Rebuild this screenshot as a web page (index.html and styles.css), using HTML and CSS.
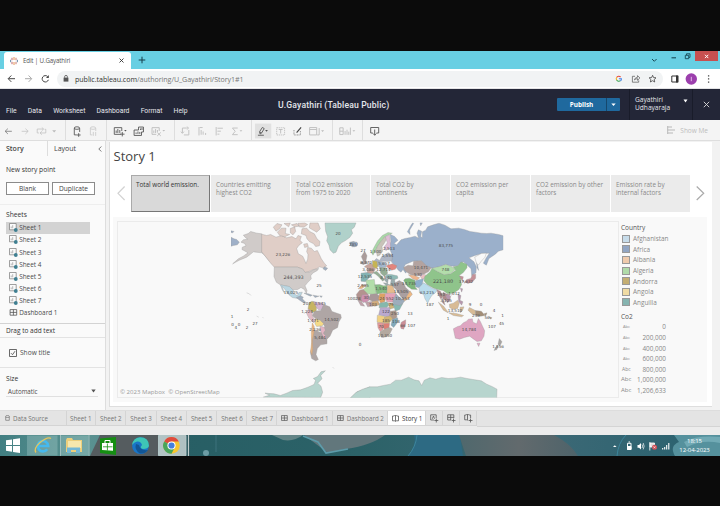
FILE: index.html
```html
<!DOCTYPE html>
<html lang="en">
<head>
<meta charset="utf-8">
<title>Edit | U.Gayathiri</title>
<link rel="stylesheet" href="styles.css">
</head>
<body>
<svg class="defs" width="0" height="0">
  <symbol id="sheet" viewBox="0 0 9 9"><path d="M.5 .5H7.2V6.8H.5Z" fill="#fbfbfb" stroke="#777" stroke-width=".7"/><path d="M2.2 5.3V3.5M3.7 5.3V2.2" stroke="#999" stroke-width=".7"/><circle cx="6.8" cy="7" r="1.9" fill="#3f7f91"/></symbol>
  <symbol id="dash" viewBox="0 0 8 7"><path d="M.6 .6H7.2V6.2H.6ZM.6 3.4H7.2M3.9 .6V6.2" fill="none" stroke="#555" stroke-width=".8"/></symbol>
</svg>
<div class="screen">
  <header class="tabstrip">
    <div class="tab">
      <svg width="8" height="8" viewBox="0 0 8 8" fill="none" stroke-width=".9"><path d="M4 0V3M4 5V8" stroke="#e38b42"/><path d="M2 .8V3.2M2 4.8V7.2" stroke="#b5505c"/><path d="M6 .8V3.2M6 4.8V7.2" stroke="#c26a60"/><path d="M.6 2.8V5.2M7.4 2.8V5.2" stroke="#5a7fa0"/></svg>
      <span>Edit | U.Gayathiri</span>
      <svg class="tabclose" width="5" height="5" viewBox="0 0 5 5"><path d="M.5 .5 4.5 4.5M4.5 .5 .5 4.5" stroke="#333" stroke-width=".9"/></svg>
    </div>
    <svg class="plus" width="8" height="8" viewBox="0 0 8 8"><path d="M4 .7V7.3M.7 4H7.3" stroke="#153d4a" stroke-width="1"/></svg>
    <svg class="wincontrols" width="72" height="18" viewBox="648 51 72 18"><path d="M652 59 654.3 61.3 656.6 59" fill="none" stroke="#174956" stroke-width="1"/><path d="M671.5 57.8H676" stroke="#174956" stroke-width="1.1"/><path d="M685.3 55.3H688.7V58.7H685.3ZM686.5 55V53.8H690V57.4H689" fill="none" stroke="#174956" stroke-width=".9"/><path d="M695 51H718V61H695Z" fill="#c75050"/><path d="M705 54.8 708.3 58.1M708.3 54.8 705 58.1" stroke="#fff" stroke-width="1"/></svg>
  </header>
  <div class="addressbar">
    <svg width="57" height="20" viewBox="0 69 57 20" fill="none" stroke="#454545" stroke-width="1"><path d="M15 78.7H8.3M11.3 75.5 8.2 78.7 11.3 81.9"/><path d="M25 78.7H31.5M28.6 75.5 31.7 78.7 28.6 81.9" stroke="#aaa"/><path d="M47.6 76.5A3.2 3.2 0 1 0 48.4 79.8"/><path d="M48.8 75V77.9H46Z" fill="#454545" stroke="none"/></svg>
    <div class="omnibox">
      <svg width="6" height="7" viewBox="0 0 6 7"><path d="M.6 2.6H5.4V6.6H.6Z" fill="#555"/><path d="M1.6 2.8V1.8A1.4 1.4 0 0 1 4.4 1.8V2.8" fill="none" stroke="#555" stroke-width=".8"/></svg>
      <span class="url"><b>public.tableau.com</b>/authoring/U_Gayathiri/Story1#1</span>
      <svg class="omniicons" width="52" height="14" viewBox="612 72 52 14" fill="none"><g stroke-width="1.1"><path d="M621.6 77A2.5 2.5 0 0 0 617.7 77.4" stroke="#e6473c"/><path d="M617.7 77.2A2.7 2.7 0 0 0 617.7 80.2" stroke="#f0b422"/><path d="M617.7 80A2.5 2.5 0 0 0 621.5 80.7" stroke="#3aa556"/><path d="M621.5 80.8Q622.5 79.9 622.4 78.7H619.9" stroke="#4481e8"/></g><path d="M636 76.3H633.4V82.2H639.7V80.4M635.4 80Q635.8 77.5 638.5 77.3V75.6L640.9 78 638.5 80.3V78.7Q636.7 78.5 635.4 80Z" stroke="#666" stroke-width=".8"/><path d="M653.6 75.3 654.6 77.6 657 77.8 655.2 79.5 655.7 82 653.6 80.7 651.4 82 651.9 79.5 650.1 77.8 652.6 77.6Z" stroke="#444" stroke-width=".8"/></svg>
    </div>
    <svg width="53" height="20" viewBox="667 69 53 20"><path d="M671.8 76H677.8V82H671.8Z" fill="none" stroke="#333" stroke-width="1"/><path d="M676 75.5H678.3V82.5H676Z" fill="#333"/><circle cx="691.3" cy="79" r="5.7" fill="#9c3fad"/><path d="M691.3 76.8V81.2" stroke="#f2d7f5" stroke-width=".8"/><path d="M708.6 75.2V76.5M708.6 78.3V79.6M708.6 81.4V82.7" stroke="#444" stroke-width="1.3"/></svg>
  </div>
  <div class="appheader">
    <nav class="menu"><span>File</span><span>Data</span><span>Worksheet</span><span>Dashboard</span><span>Format</span><span>Help</span></nav>
    <h1>U.Gayathiri (Tableau Public)</h1>
    <div class="publish"><span>Publish</span><svg width="13" height="13" viewBox="0 0 13 13"><path d="M4.3 5.5H8.7L6.5 8Z" fill="#fff"/></svg></div>
    <div class="user"><span>Gayathiri<br>Udhayaraja</span><svg width="5" height="4" viewBox="0 0 5 4"><path d="M.5 .5H4.5L2.5 3.5Z" fill="#fff"/></svg></div>
    <svg class="close" width="7" height="7" viewBox="0 0 7 7"><path d="M.8 .8 6.2 6.2M6.2 .8 .8 6.2" stroke="#ddd" stroke-width=".9"/></svg>
  </div>
  <div class="toolbar">
    <svg class="grp" width="66" height="21" viewBox="0 120 66 21" fill="none" stroke="#777" stroke-width=".8"><path d="M12 131.3H5.3M8 128.6 5.2 131.3 8 134"/><g stroke="#c2c2c2"><path d="M22 131.3H28.5M25.8 128.6 28.6 131.3 25.8 134"/><path d="M39.5 133H37.8V129H44M42.5 127.5 44.3 129 42.5 130.7M45.3 129.3H46.5V133H41M42.5 131.4 40.6 133 42.5 134.7"/></g><path d="M53 130.2H57L55 132.5Z" fill="#bbb" stroke="none"/></svg>
    <svg class="grp" width="41" height="21" viewBox="66 120 41 21" fill="none" stroke="#555" stroke-width=".9"><path d="M74.5 128.3V135H77M80 128.3V132M79 133.2V137M77 135.1H81"/><ellipse cx="77.2" cy="128" rx="2.8" ry="1.3"/><g stroke="#ccc"><path d="M91 128.3V135H93M96.5 128.3V131M94 132V136M96.4 132V136"/><ellipse cx="93.7" cy="128" rx="2.8" ry="1.3"/></g></svg>
    <svg class="grp" width="68" height="21" viewBox="107 120 68 21" fill="none" stroke="#555" stroke-width=".9"><path d="M121 134.4H114.4V127.6H122V131M116.3 133V130.5M118 133V129M120 133V130M122.5 132V136.5M120.3 134.2H124.8"/><path d="M124.4 130H127L125.7 131.6Z" fill="#555" stroke="none"/><path d="M139 130H134.5V135.5H142V132M139 130V127H144V132H142M136.5 134V132.5M138.4 134V131.5M140.3 134V132M141 130V128.5M142.5 130V128"/><g stroke="#bbb"><path d="M157 134.4H152.7V127.6H160V131M154.5 133V130.5M156.3 133V129M158.2 132V130M158 132.5 161.6 136M161.6 132.5 158 136"/><path d="M163.2 130H166L164.6 131.6Z" fill="#bbb" stroke="none"/></g></svg>
    <svg class="grp" width="77" height="21" viewBox="175 120 77 21" fill="none" stroke="#c2c2c2" stroke-width="1"><path d="M182.5 133V128H187M184 135H189V130M181 131.7 182.5 133.4 184 131.7M187 126.7 188.8 128 187 129.4"/><path d="M199.3 127V135.5M201.5 134.8V130M203.5 134.8V131.5M206 135V133M200 127.5H203M216.7 127V135.5M218 128.2H223.5M218 131.2H221.5M218 134.2H220"/><path d="M238.5 128H233.2L236 131.3 233.2 134.7H238.5"/><path d="M240.5 130.2H243.2L241.8 131.8Z" fill="#bbb" stroke="none"/></svg>
    <svg class="grp" width="81" height="21" viewBox="252 120 81 21" fill="none" stroke="#bbb" stroke-width=".9"><path d="M255 123.5H271.5V138.5H255Z" fill="#e1e1e1" stroke="none"/><path d="M258 135.3H264M260.2 134 259.6 131.8 262.5 127.4 264.4 128.6 261.7 133ZM260 132 261.6 133" stroke="#555"/><path d="M265.3 130H268.1L266.7 131.7Z" fill="#555" stroke="none"/><path d="M277 127.7H285V135H277Z" stroke-dasharray="1.2 .8"/><path d="M279 129.5H283M281 129.5V133.5"/><path d="M294.5 130V135H301V131" stroke="#888" stroke-dasharray="1 .6"/><path d="M297.2 132.6 301.7 127.3" stroke="#444" stroke-width="1.2"/><path d="M310.3 127.5H317.5V135H310.3ZM310.3 129.5H317.5M320 128V135H318"/><path d="M322 130.3H325L323.5 132Z" fill="#bbb" stroke="none"/></svg>
    <svg class="grp" width="30" height="21" viewBox="333 120 30 21" fill="none" stroke="#bbb" stroke-width=".9"><path d="M340 134.7V127.7H343.5V134.7ZM345.5 135V131M347.5 135V129.7M349.3 135V131.7M351 135V127.5M340 131.2H343.5"/><path d="M353.2 130.2H356L354.6 131.9Z" fill="#bbb" stroke="none"/></svg>
    <svg width="22" height="21" viewBox="363 120 22 21" fill="none" stroke="#555" stroke-width=".9"><path d="M372.8 133H370.7V127.5H378.7V133H376.6M374.7 129.5V135.2M372.9 133.4 374.7 135.2 376.5 133.4"/></svg>
    <div class="showme"><svg width="9" height="8" viewBox="0 0 9 8"><path d="M.5 1H5M.5 4H8M.5 7H6" stroke="#ccc" stroke-width="1.5"/><path d="M.7 0V8" stroke="#bbb"/></svg><span>Show Me</span></div>
  </div>
  <main class="workspace">
    <aside class="side">
      <div class="sidetabs"><b>Story</b><span>Layout</span><svg width="4" height="6" viewBox="0 0 4 6"><path d="M3.3 .5 .8 3 3.3 5.5" fill="none" stroke="#555" stroke-width=".8"/></svg></div>
      <section class="newpoint"><h2>New story point</h2><div class="buttons"><button>Blank</button><button>Duplicate</button></div></section>
      <section class="sheets">
        <h2>Sheets</h2>
        <ul>
          <li class="on"><svg width="9" height="9"><use href="#sheet"/></svg>Sheet 1</li>
          <li><svg width="9" height="9"><use href="#sheet"/></svg>Sheet 2</li>
          <li><svg width="9" height="9"><use href="#sheet"/></svg>Sheet 3</li>
          <li><svg width="9" height="9"><use href="#sheet"/></svg>Sheet 4</li>
          <li><svg width="9" height="9"><use href="#sheet"/></svg>Sheet 5</li>
          <li><svg width="9" height="9"><use href="#sheet"/></svg>Sheet 6</li>
          <li><svg width="9" height="9"><use href="#sheet"/></svg>Sheet 7</li>
          <li><svg width="9" height="7"><use href="#dash"/></svg>Dashboard 1</li>
        </ul>
      </section>
      <div class="drag">Drag to add text</div>
      <div class="showtitle"><svg width="8" height="8" viewBox="0 0 8 8" fill="none" stroke="#444"><path d="M.5 .5H7.5V7.5H.5Z" stroke-width=".8"/><path d="M2 4.2 3.5 5.7 6 2.2" stroke-width=".8"/></svg>Show title</div>
      <div class="size"><h2>Size</h2><div class="select"><span>Automatic</span><svg width="5" height="4" viewBox="0 0 5 4"><path d="M.3 .5H4.7L2.5 3.5Z" fill="#555"/></svg></div></div>
    </aside>
    <article class="canvas">
      <h2 class="title">Story 1</h2>
      <div class="points">
        <svg width="21" height="37" viewBox="0 0 21 37"><path d="M14.6 11.5 8 18.3 14.6 25" fill="none" stroke="#d2d2d2" stroke-width="1.2"/></svg>
        <div class="point on">Total world emission.</div><div class="point">Countries emitting highest CO2</div><div class="point">Total CO2 emission from 1975 to 2020</div><div class="point">Total CO2 by continents</div><div class="point">CO2 emission per capita</div><div class="point">CO2 emission by other factors</div><div class="point">Emission rate by internal factors</div>
        <svg width="20" height="37" viewBox="0 0 20 37"><path d="M5.7 11.5 12.7 18.3 5.7 25" fill="none" stroke="#aaa" stroke-width="1.2"/></svg>
      </div>
      <div class="viz">
        <div class="mapbox">
          <svg class="map" width="500" height="176" viewBox="118 221.5 500 176">
            <clipPath id="frame"><path d="M231 222H503.3V397H231Z"/></clipPath>
            <g clip-path="url(#frame)">
            <g transform="translate(230 215) scale(.33333)" stroke="#999" stroke-width="1.1" stroke-linejoin="round">
              <path fill="#9fb0c8" d="M3 65 12 70 20 72 28 80 22 88 10 90 3 92ZM3 46 12 48 8 52 3 51Z"/>
              <path fill="#d0cbc9" d="M95 55 80 53 62 48 55 54 40 59 46 66 53 71 40 73 33 80 44 84 48 91 37 95 36 102 47 108 54 112 40 122 25 130 8 145 28 134 50 125 63 115 70 109 95 112 103 118 114 132 120 138 116 126 107 113 95 109Z"/>
              <path fill="#e0cec7" d="M95 56 110 60 122 57 138 65 155 60 170 67 186 63 198 70 204 60 214 63 210 74 217 82 207 89 200 99 205 115 218 122 223 132 228 144 233 131 234 117 230 108 233 96 244 98 253 108 262 105 268 117 274 130 283 143 290 151 280 157 268 154 260 160 248 163 237 168 225 171 218 161 202 155H133L122 143 112 130 95 109Z"/>
              <path fill="#e0cec7" d="M130 35 141 24 156 28 149 39 138 47ZM142 50 154 38 168 38 166 54 179 57 164 64 149 60ZM162 24 181 22 176 34ZM181 39 194 34 197 48 189 58 181 52ZM184 28 201 24 207 32 194 34ZM204 23 224 22 233 27 222 35 208 34ZM216 40 230 38 239 48 253 55 261 70 270 78 268 91 257 93 250 84 239 79 231 70 228 60 214 55ZM221 86 232 84 235 93 224 96ZM240 22 264 22 271 40 260 50 248 43 238 37Z"/>
              <path fill="#d0cbc9" d="M133 155H202L217 160 226 171 240 169 250 163 266 159 262 165 248 173 242 181 244 190 232 202 225 211 231 225 229 234 223 222 213 216 203 222 188 223 179 214 151 208 139 200 132 183Z"/>
              <path fill="#b9d6e2" d="M151 208 178 213 190 224 190 234 202 240 207 231 217 230 212 241 203 249 187 246 177 238 168 226 163 219 156 213 163 232 158 225Z"/>
              <path fill="#9faebf" d="M199 246 212 241 220 245 217 250 227 260 222 263 206 252ZM222 233 235 235 247 239 241 242 230 237ZM249 239 267 242 255 246ZM269 241 277 242 273 246ZM283 154 293 158 287 165 279 160Z"/>
              <path fill="#c7b461" d="M237 262 246 257 259 262 260 274 258 290 247 290 234 281Z"/>
              <path fill="#d4b5d1" d="M250 258 264 261 275 262 281 269 276 282 266 283 259 275Z"/>
              <path fill="#afa6a5" d="M281 267 299 274 306 288 332 297 334 307 326 320 323 336 308 344 300 362 291 371 291 385 272 388 262 399 258 417 265 432 257 436 245 429 241 411 245 393 246 365 251 342 272 351 280 344 284 332 271 315 257 309 247 301 254 287 273 285Z"/>
              <path fill="#e2bcc5" d="M236 280 247 290 247 302 257 316 251 322 237 308 229 292Z"/>
              <path fill="#f5da87" d="M257 309 270 314 281 324 277 331 260 333 255 325Z"/>
              <path fill="#e2b4c2" d="M270 332 283 335 286 344 280 353 291 365 282 370 271 345Z"/>
              <path fill="#e7b685" stroke="#c49b70" d="M247 322 253 334 251 355 247 373 248 400 246 418 242 407 245 380 244 352Z"/>
              <path fill="#b0d1ca" d="M285 22H378L373 35 364 43 368 53 359 66 345 76 334 82 325 92 318 110 310 113 300 103 297 89 290 76 293 64 287 47Z"/>
              <path fill="#899cad" d="M359 80 371 78 383 83 380 92 368 94 361 90Z"/>
              <path fill="#b7d5ce" d="M100 545 119 539 105 533 132 535 151 540 170 533 188 525 212 523 234 515 252 507 257 494 250 489 263 483 273 469 286 466 272 480 276 490 263 503 273 512 278 530 272 546ZM362 548 381 529 403 521 420 514V550Z"/>
              <path fill="none" stroke="#aaa" d="M50 232 58 235 63 240M80 302 86 305M98 305 100 308M390 380 391 382M308 455 312 459"/>
            </g>
            <g transform="translate(340 215) scale(.33333)" stroke="#999" stroke-width="1" stroke-linejoin="round">
              <path fill="#9bb0cb" d="M150 56 164 63 174 74 162 84 170 88 183 73 195 69 211 66 225 62 236 68 231 53 235 43 245 47 242 63 247 67 247 49 257 44 263 34 280 28 297 23 315 29 333 40 356 38 373 42 390 48 406 50 424 53 440 54 453 53 476 57 490 61V103L475 107 466 116 447 129 439 149 430 143 438 128 448 113 426 114 405 120 387 127 402 139 409 154 408 172 395 181 393 160 382 149 370 139 354 151 335 152 316 147 299 154 275 158 257 151 243 136 219 137 196 147 191 157 202 165 197 173 189 162 183 170 175 164 165 151 154 139 157 119 151 105 147 91 153 78Z"/>
              <path fill="#9bb0cb" d="M202 49 213 29 218 22 221 24 209 44 210 57ZM240 22 247 22 242 31ZM409 132 413 150 416 165 411 157ZM38 80 51 80 53 89 43 94 32 88Z"/>
              <path fill="#f9f9f9" d="M404 125 424 114 439 113 435 125 424 137 415 149 409 142Z"/>
              <path fill="#a9d7a7" d="M94 111 103 94 113 76 127 60 144 51 157 53 147 58 136 63 122 79 113 93 105 109 99 119Z"/>
              <path fill="#c9c3b9" d="M112 93 122 79 135 63 142 67 133 83 126 93 128 107 119 119 112 122 108 105Z"/>
              <path fill="#dfbcd5" d="M136 64 148 58 151 77 152 98 137 104 132 95 142 82Z"/>
              <path fill="#aeb6c5" d="M126 122 145 112 157 119 156 135 146 138 130 137 112 140 103 136 109 129 119 135Z"/>
              <path fill="#aa9c9a" d="M64 123 74 107 81 121 78 135 83 143 70 147 60 143 70 137Z"/>
              <path fill="#c7a49b" d="M79 149 91 143 101 149 106 161 99 174 81 173 84 159 73 154Z"/>
              <path fill="#c6b454" d="M97 135 111 138 115 150 109 160 98 153Z"/>
              <path fill="#a4b8ce" d="M112 139 134 140 139 154 121 158 113 150Z"/>
              <path fill="#83b3b3" d="M63 173 80 171 96 176 86 188 76 199 63 197Z"/>
              <path fill="#95ae95" d="M98 172 110 167 127 184 133 193 128 197 116 184 107 176ZM119 156 139 157 143 173 133 183 122 173Z"/>
              <path fill="#e3857d" d="M138 151 157 145 171 151 166 161 155 164 147 160Z"/>
              <path fill="#8fbab5" d="M139 177 154 177 172 181 174 188 160 194 149 191 139 186Z"/>
              <path fill="#b3a3a0" d="M191 156 204 149 219 151 221 137 244 136 259 150 274 157 265 169 251 176 229 180 212 178 202 171 195 166Z"/>
              <path fill="#efb58d" d="M205 178 224 180 239 187 231 194 218 190Z"/>
              <path fill="#eac0c3" d="M237 177 254 177 264 183 247 192Z"/>
              <path fill="#7fb77c" d="M195 190 208 188 225 194 226 215 232 222 215 221 202 212 191 195Z"/>
              <path fill="#8dafcc" d="M226 196 241 192 250 190 247 207 236 217 227 214Z"/>
              <path fill="#8fc48b" d="M254 183 270 169 276 158 293 168 312 177 332 175 347 164 339 154 354 151 363 139 381 146 381 157 370 171 357 181 364 184 362 196 365 207 357 222 340 233 323 235 309 225 297 223 281 218 261 207 252 196Z"/>
              <path fill="#b3ddab" d="M276 158 299 153 318 147 335 154 346 162 332 174 313 178 292 168Z"/>
              <path fill="#badcec" d="M238 216 250 202 261 208 278 219 293 223 285 233 276 239 268 252 263 263 255 250 251 237 238 231Z"/>
              <path fill="#b18b8b" d="M290 222 302 228 308 243 303 251 295 237ZM309 230 325 238 329 250 321 258 310 250 315 269 307 261 308 246Z"/>
              <path fill="#b697ad" d="M323 235 332 242 329 257 321 262 323 252 317 243ZM361 218 368 220 365 230ZM354 236 363 240 360 254 369 259 365 269 356 258Z"/>
              <path fill="#c59198" d="M358 181 370 184 367 197 375 201 380 192 392 189 398 176 407 176 407 188 398 199 384 204 373 199 365 194Z"/>
              <path fill="#d8bb95" d="M295 260 311 272 322 287 324 292 310 284ZM328 266 340 263 353 254 358 263 353 279 339 282 329 276ZM326 292 349 294 371 300 365 304 340 300ZM360 275 372 274 368 284 361 292ZM388 276 406 285 407 300 394 294 384 284Z"/>
              <path fill="#a38e77" d="M406 285 424 287 435 300 422 302 407 299ZM432 295 441 292 437 302ZM446 303 456 307 452 311Z"/>
              <path fill="#dfa6c2" d="M340 340 353 333 361 331 370 322 380 317 385 311 397 310 399 320 410 325 415 309 421 318 428 333 434 346 432 362 424 376 411 378 401 371 389 362 373 366 359 371 346 368 343 355ZM411 383 420 383 416 393Z"/>
              <path fill="#a7a4a2" d="M478 369 486 379 480 391 474 386ZM468 394 475 388 471 402 462 405Z"/>
              <path fill="#9aacae" d="M131 191 145 190 143 203 130 202 139 211 151 207 154 190 164 192 166 207 157 219Z"/>
              <path fill="#aa9fa0" d="M163 203 178 195 191 203 197 216 209 227 215 234 208 246 193 253 182 243 171 225 162 216Z"/>
              <path fill="#edb884" d="M210 226 217 237 205 250 191 258 183 253 196 249ZM78 211 70 216 65 220 54 220 67 207Z"/>
              <path fill="#b2dda9" d="M78 194 103 192 105 208 109 235 98 237 83 235 68 224 80 213Z"/>
              <path fill="#86bc83" d="M104 208 119 207 131 211 141 210 141 234 128 232 110 236Z"/>
              <path fill="#e6bb8d" d="M142 209 157 210 167 232 141 234Z"/>
              <path fill="#b3938f" d="M49 237 59 224 70 222 84 236 91 249 75 249 66 259 53 254Z"/>
              <path fill="#cf93b2" d="M66 238 82 237 90 251 82 259 69 261 63 251Z"/>
              <path fill="#a89899" d="M91 236 110 235 119 242 117 255 99 258 86 252Z"/>
              <path fill="#dda265" d="M119 234 136 234 135 258 122 263 115 249Z"/>
              <path fill="#e6a2b8" d="M137 234 167 233 170 246 160 260 141 259 134 247Z"/>
              <path fill="#9dadbc" d="M168 235 179 246 194 256 184 270 172 282 163 268 158 258Z"/>
              <path fill="#bfa2aa" d="M54 255 66 260 74 272 62 270ZM76 260 97 258 98 272 83 274Z"/>
              <path fill="#d3ad7e" d="M96 258 114 255 119 268 105 272 96 271Z"/>
              <path fill="#85b8ac" d="M119 263 140 259 148 267 140 276 117 277Z"/>
              <path fill="#cfb87b" d="M145 262 159 263 163 277 148 281Z"/>
              <path fill="#86b9b3" d="M160 266 178 270 188 264 179 282 166 287Z"/>
              <path fill="#baa9cf" d="M121 277 149 276 151 293 148 305 134 302 116 298Z"/>
              <path fill="#ad9a8e" d="M151 287 168 285 171 305 159 313 148 303Z"/>
              <path fill="#f0d082" d="M112 299 133 302 138 317 129 323 111 320Z"/>
              <path fill="#d3b675" d="M134 304 151 301 158 310 146 324 130 322Z"/>
              <path fill="#81a9ba" d="M157 311 173 307 174 319 161 336 153 329Z"/>
              <path fill="#e2999c" d="M112 322 129 322 129 342 121 349 114 337Z"/>
              <path fill="#dd7f75" d="M130 323 149 323 147 337 134 342 129 336Z"/>
              <path fill="#b4a99f" d="M121 349 133 341 149 336 157 340 150 354 140 364 125 366 119 355Z"/>
              <path fill="#cc8e97" d="M184 320 197 313 197 325 191 341 183 339 181 331Z"/>
              <path fill="#b7d5ce" d="M30 548 48 531 68 521 90 514 112 514 130 510 151 506 167 494 184 494 206 485 222 493 237 496 245 510 253 494 270 487 287 491 305 486 325 489 342 488 362 485 381 489 399 492 424 496 440 506 456 513 471 521 470 548Z"/>
            </g>
            </g>
            <g class="labels">
              <text x="283" y="255.4">23,226</text><text class="big" x="293.5" y="278">244,393</text><text x="338" y="234">20</text><text x="291" y="293">18,025</text><text x="319" y="286">25</text><text x="307" y="304">207</text><text x="320" y="304.5">3,545</text><text x="307" y="312">1,224</text><text x="313" y="321">1,471</text><text x="331.5" y="320">14,502</text><text x="315" y="330">2,236</text><text x="320" y="338">5,484</text><text x="248" y="310">2</text><text x="232" y="317">1</text><text x="232.5" y="325">0</text><text x="235.7" y="328">4</text><text x="239" y="325.5">0</text><text x="247" y="328">2</text><text x="255" y="324.5">27</text><text x="360" y="345">0</text>
              <text x="353" y="245">285</text><text x="363" y="251">27</text><text x="375.5" y="252">1,500</text><text x="389" y="249">2,513</text><text x="387.5" y="256.5">1,554</text><text x="366" y="263.5">9,370</text><text x="384" y="264">5,657</text><text x="368" y="270.5">3,486</text><text x="383.5" y="270.5">12,714</text><text x="365" y="277.5">12,535</text><text x="386" y="278.5">8,840</text><text x="363" y="286.5">2,995</text><text x="381" y="289.5">1,540</text><text x="395" y="285">557</text><text x="401" y="292">18,505</text><text x="354" y="299">10028</text><text x="382" y="299">24</text><text x="390" y="299">552</text><text x="402.5" y="299">10,553</text><text x="366" y="298">30</text><text x="373" y="305">103</text><text x="391" y="305">79</text><text x="386" y="312.5">122</text><text x="395" y="314.5">250</text><text x="386" y="321.5">185</text><text x="396" y="322">118</text><text x="381" y="327.5">70</text><text x="385" y="336">10,350</text><text x="410" y="314.5">13</text><text x="411.5" y="326.5">107</text><text x="403" y="326.5">66</text>
              <text x="446" y="246">83,775</text><text x="421" y="268.5">10,471</text><text x="418" y="275.5">530</text><text x="445.5" y="270.5">748</text><text class="big" x="443" y="282.7">221,180</text><text x="409" y="284">14,735</text><text x="427" y="293.5">63,215</text><text x="430" y="305">187</text><text x="466" y="282">37,632</text><text x="441" y="295">190</text><text x="454" y="294.5">1,012</text><text x="446" y="301">3,125</text><text x="455" y="311.5">13,510</text><text x="448" y="319">1</text><text x="470" y="305">9</text><text x="481" y="305">0</text><text x="476" y="316">236</text><text x="487" y="318">56</text><text x="494" y="311">4</text><text x="492" y="327">107</text><text x="501.5" y="324">45</text><text x="502.5" y="316">1</text><text x="469" y="330">14,784</text><text x="498" y="347">1,556</text>
            </g>
          </svg>
          <span class="attribution">© 2023 Mapbox&nbsp; © OpenStreetMap</span>
        </div>
        <div class="legend">
          <h3>Country</h3>
          <ul class="colors"><li><i class="c1"></i>Afghanistan</li><li><i class="c2"></i>Africa</li><li><i class="c3"></i>Albania</li><li><i class="c4"></i>Algeria</li><li><i class="c5"></i>Andorra</li><li><i class="c6"></i>Angola</li><li><i class="c7"></i>Anguilla</li></ul>
          <h3>Co2</h3>
          <ul class="sizes"><li><i>Abc</i><span>0</span></li><li><i>Abc</i><span>200,000</span></li><li><i>Abc</i><span>400,000</span></li><li><i>Abc</i><span>600,000</span></li><li class="m"><i>Abc</i><span>800,000</span></li><li class="l"><i>Abc</i><span>1,000,000</span></li><li class="l"><i>Abc</i><span>1,206,633</span></li></ul>
        </div>
      </div>
    </article>
  </main>
  <nav class="sheettabs">
    <span class="source"><svg width="5" height="6" viewBox="0 0 5 6"><path d="M.7 1V5.3H4.3V1M.7 1.2A1.8 .7 0 0 1 4.3 1.2M.7 2.4H4.3" fill="none" stroke="#777" stroke-width=".7"/></svg>Data Source</span>
    <span class="t1">Sheet 1</span><span class="t2">Sheet 2</span><span class="t3">Sheet 3</span><span class="t4">Sheet 4</span><span class="t5">Sheet 5</span><span class="t6">Sheet 6</span><span class="t7">Sheet 7</span>
    <span class="d1"><svg width="7" height="6.2"><use href="#dash"/></svg>Dashboard 1</span><span class="d2"><svg width="7" height="6.2"><use href="#dash"/></svg>Dashboard 2</span>
    <span class="active"><svg width="7" height="7" viewBox="0 0 7 7"><path d="M2 1H.5V5.8H2.5L3.5 6.5 4.5 5.8H6.5V1H5M2.2 .6H4.8M3.5 .6V6" fill="none" stroke="#555" stroke-width=".8"/></svg>Story 1</span>
    <span class="add"><svg width="9" height="9" viewBox="0 0 9 9"><path d="M4 6H.7V.8H6.2V4M2.3 4.8 3.5 2 4.5 4.8M6.3 4.5V8.5M4.4 6.5H8.3" fill="none" stroke="#555" stroke-width=".8"/></svg></span>
    <span class="add"><svg width="9" height="9" viewBox="0 0 9 9"><path d="M4 6H.7V.8H6.8V4M.7 3.4H6.8M3.7 .8V6M6.5 4.5V8.5M4.6 6.5H8.5" fill="none" stroke="#555" stroke-width=".8"/></svg></span>
    <span class="add"><svg width="9" height="9" viewBox="0 0 9 9"><path d="M2 1H.7V5.8H2.5L3.5 6.5M5 1H6.6V4M2.2 .6H4.8M3.5 .6V6M6.5 4.5V8.5M4.6 6.5H8.5" fill="none" stroke="#555" stroke-width=".8"/></svg></span>
  </nav>
  <footer class="taskbar">
    <svg class="wall" width="720" height="21" viewBox="0 0 720 21">
      <defs><linearGradient id="left"><stop offset="0" stop-color="#427f82"/><stop offset=".45" stop-color="#5a9291"/><stop offset=".8" stop-color="#53858a"/><stop offset="1" stop-color="#355e64"/></linearGradient><linearGradient id="mid"><stop offset="0" stop-color="#235b61"/><stop offset=".5" stop-color="#2c6268"/><stop offset=".75" stop-color="#3d6976"/><stop offset="1" stop-color="#28616e"/></linearGradient><linearGradient id="skin"><stop offset="0" stop-color="#4f686d"/><stop offset=".5" stop-color="#626a6d"/><stop offset="1" stop-color="#4e636a"/></linearGradient></defs>
      <path fill="url(#mid)" d="M0 0H720V21H0Z"/><path fill="url(#left)" d="M0 0H190V21H0Z"/><path fill="#555c5f" d="M100 0H158V21H90Z"/>
      <path fill="#638486" d="M272 0H303Q294 7 283 5Z"/><path fill="#62777c" d="M304 0H385Q372 10 346 14L328 18Z"/><path fill="none" stroke="#5d9cab" stroke-width="1.6" d="M303 1 318 7 326 18 348 14"/>
      <path fill="#2d6a83" d="M414 0H460L463 21H408Q417 9 414 0Z"/><path fill="url(#skin)" d="M459 0H554Q571 9 578 21H466Z"/><path fill="none" stroke="#3c849a" d="M417 0Q416 12 408 21M626 0Q618 8 617 21"/><path fill="#55919d" d="M674 0H720V21H675Q669 11 679 7Z"/><path fill="#71aab5" d="M684 7Q697 0 720 2V8Q702 4 687 12Z"/><circle cx="206" cy="18" r="3" fill="#6c9ca4"/><path d="M216 0V17" stroke="#3d737c"/>
    </svg>
    <svg class="apps" width="190" height="21" viewBox="0 0 190 21">
      <g fill="#fff"><path d="M6 5.3 12 4.4V10H6ZM13 4.2 20 3.2V10H13ZM6 11H12V16.8L6 15.8ZM13 11H20V17.9L13 16.9Z"/></g>
      <path d="M27 .5H57.5V20.5H27ZM60.5 .5H88.5V20.5H60.5Z" fill="#b9d9d6" opacity=".3"/><path d="M60.5 0V21M89 0V21" stroke="#b9d0cf" stroke-width=".7"/>
      <path d="M38 11H48.2A5.2 5.2 0 1 0 47.2 14.3" fill="none" stroke="#46b9ed" stroke-width="2.7"/><path d="M36 17.5Q33 14 40 7.5 48 1 51 3.5" fill="none" stroke="#e6c65c" stroke-width="1.2"/>
      <path d="M66 5 67 3H72L73 5H82V17H66Z" fill="#eccf7c"/><path d="M68 6H81V13H68Z" fill="#f6e7ad"/><path d="M67 18V12.5H80V18H76V15H71V18Z" fill="#73b7d5"/>
      <path d="M100 3.5 116 2V20L100 18Z" fill="#158e12"/><path d="M102 8H113V15.8L102 15Z" fill="#fff"/><path d="M105 8V5.5H110V8" fill="none" stroke="#fff"/><path d="M107.4 8.5V15.5M103 11.8H112.5" stroke="#158e12" stroke-width=".8"/>
      <circle cx="140.5" cy="10.7" r="8.4" fill="#1976c8"/><path d="M132 10Q133 3 140 2.3 149 2.5 149 11 148 14 143 14 139 13 142 10 141 6 137 6.5 134 7 132 10Z" fill="#3ec5b6"/><path d="M136 9Q134 15 140 18.5 145 19 148 15 140 16 139 10Z" fill="#125696"/>
      <path d="M158.5 .5H186V20.5H158.5Z" fill="#c9d4d5" stroke="#d9e3e2" stroke-width=".8" opacity=".82"/><path d="M188.5 0V21" stroke="#bdcccc"/><circle cx="171.5" cy="10.5" r="8.3" fill="#f7c62f"/><path d="M171.5 10.5 164.2 6.4A8.3 8.3 0 0 1 178.8 6.4H171.5Z" fill="#df4b3d"/><path d="M171.5 10.5 164.2 6.4A8.3 8.3 0 0 0 171.5 18.8L175 12Z" fill="#48a55a"/><circle cx="171.5" cy="10.5" r="4.1" fill="#fff"/><circle cx="171.5" cy="10.5" r="3.1" fill="#447fdd"/>
    </svg>
    <svg class="tray" width="62" height="21" viewBox="610 0 62 21" fill="none" stroke="#fff"><path d="M613 12 614.8 10.2 616.6 12Z" fill="#fff" stroke="none"/><path d="M627.5 8.3H631V14.5H627.5ZM628.5 7H630" stroke-width="1"/><path d="M627.5 11.5H631V14.5H627.5Z" fill="#fff"/><path d="M637.5 10H639L641 8V14.5L639 12.8H637.5Z" fill="#fff" stroke="none"/><path d="M642 9.4Q643.3 11.2 642 13M643.2 8Q645 11.3 643.2 14.4" stroke-width=".7"/><path d="M649.8 7V15.5M650 8H654.5V12H650Z" fill="#ddd" stroke-width=".8"/><circle cx="654.5" cy="12.3" r="2.5" fill="#cb4f56" stroke="none"/><path d="M653.5 11.3 655.5 13.3M655.5 11.3 653.5 13.3" stroke-width=".6"/><path d="M662.7 14.5V13M664.7 14.5V12M666.7 14.5V10M668.8 14.5V8" stroke-width="1.1"/></svg>
    <div class="clock">18:15<br>12-04-2023</div>
  </footer>
</div>
</body>
</html>
```
FILE: styles.css
```css
*{box-sizing:border-box}
body{margin:0;background:#0b0b0b;font:6.8px/9px "Open Sans","Noto Sans",sans-serif;color:#4a4a4a;overflow:hidden}
h1,h2,h3,ul,p{margin:0;padding:0;font-weight:400}
ul{list-style:none}
svg{display:block;flex:none}
i{font-style:normal}
.defs{position:absolute}
.screen{width:720px;height:506px;padding:51px 0 50px;background:#0b0b0b;display:flex;flex-direction:column;white-space:nowrap}
.tabstrip{height:18px;background:#68cfe3;display:flex;align-items:center;flex:none}
.tab{align-self:stretch;margin:1px 0 0 4px;width:127px;background:#fff;border-radius:3px 3px 0 0;display:flex;align-items:center;padding-left:6px;font-size:6.2px;letter-spacing:-.15px;color:#555}
.tab span{margin-left:5px;width:91px}
.tabclose{margin-left:5px}
.plus{margin-left:7px}
.wincontrols{margin-left:auto}
.addressbar{height:20px;background:#fff;display:flex;align-items:center;flex:none;border-bottom:1px solid #e3e3e5}
.omnibox{width:606px;height:16px;background:#f1f3f4;border-radius:8px;display:flex;align-items:center;padding-left:6px}
.url{margin-left:6px;font:7.1px/10px "Open Sans",sans-serif;letter-spacing:-.05px;color:#777}
.url b{font-weight:400;color:#333}
.omniicons{margin-left:auto}
.addressbar>svg:last-child{margin-left:4px}
.appheader{height:31px;background:#232637;color:#e5e7ec;display:flex;flex:none;align-items:center}
.menu{width:278px;display:flex;padding:14px 0 0 6px;gap:11.2px;font:6.8px/9px Roboto,sans-serif}
.appheader h1{font:500 8.6px/12px Roboto,sans-serif;letter-spacing:.16px;width:279px}
.publish{width:63px;height:13px;background:#1f699e;border-radius:1px;display:flex;color:#fff;font:700 6.4px/13px "Open Sans",sans-serif;text-align:center;margin-right:9px}
.publish span{width:50px;border-right:1px solid #16486d}
.user{height:31px;width:64px;border-left:1px solid #191c2a;border-right:1px solid #191c2a;display:flex;padding:7px 0 0 5px;font:6.6px/8px "Open Sans",sans-serif}
.user span{width:48px}
.user svg{margin-top:3px}
.close{margin-left:10px}
.toolbar{height:21px;background:#f4f4f4;border-bottom:1px solid #dedede;display:flex;flex:none}
.toolbar .grp{border-right:1px solid #dedede}
.showme{margin-left:auto;padding-right:12px;display:flex;align-items:center;gap:4px;color:#bdbdbd;font-size:6.5px}
.workspace{height:269px;display:flex;background:#f2f2f2;flex:none}
.side{width:106px;background:#fafafa;border-right:1px solid #ddd}
.side h2{font-size:6.7px;line-height:9px;color:#333}
.sidetabs{height:15px;display:flex;align-items:center;padding-left:6px;color:#444}
.sidetabs b{width:41px;font-weight:600;font-size:7px}
.sidetabs span{border-left:1px solid #ddd;padding-left:6px;width:51px;line-height:15px;font-size:7px}
.newpoint{height:49px;padding:9px 0 0 6px;border-bottom:1px solid #eee}
.buttons{display:flex;gap:3px;margin-top:8px}
.buttons button{width:43px;height:13px;border:1px solid #8b8b8b;background:#fff;padding:0;font:500 6.6px/10px "Open Sans",sans-serif;color:#444}
.sheets{height:119px;padding:5px 0 0 6px;border-bottom:1px solid #d3d3d3}
.sheets ul{padding-top:2.8px}
.sheets li{height:12.1px;width:84px;display:flex;align-items:center;padding-left:3px;font-size:6.4px}
.sheets li svg{margin-right:1.2px}
.sheets .on{background:#d3d3d3}
.drag{height:14px;border-bottom:1px solid #e3e3e3;padding-left:6px;line-height:14px;font-size:6.5px;color:#333}
.showtitle{height:30px;border-bottom:1px solid #e3e3e3;display:flex;align-items:center;gap:3px;padding-left:9px;font-size:6.6px}
.size{padding:6px 7px 0 6px}
.select{margin-top:3px;height:11px;border-bottom:1px solid #e0e0e0;display:flex;align-items:center;justify-content:space-between;padding:0 2px;font-size:6.2px}
.canvas{width:603px;height:265px;margin:1px 0 0 3px;background:#fff;border:solid #dedede;border-width:0 0 1px 1px}
.title{height:33px;padding:5px 0 0 3.5px;font-size:13px;line-height:18px;color:#444}
.points{height:37px;display:flex}
.point{width:79px;height:37px;margin-right:1px;background:#ebebeb;border:1px solid #ebebeb;padding:4.5px 4px 0;white-space:normal;font-size:6.35px;line-height:8.5px;color:#898989}
.points .on{background:#d9d9d9;border-color:#aaa #777 #777 #aaa;color:#333}
.viz{width:594px;height:185px;margin:5px 0 0 3px;background:#f9f9f9;padding:4px;display:flex}
.mapbox{width:502px;height:177px;border:1px solid #ebebeb;position:relative}
.attribution{position:absolute;left:2px;bottom:0;font-size:6.05px;color:#999}
.labels{font:4.1px "DejaVu Sans",sans-serif;fill:#4c4c4c;text-anchor:middle}
.labels .big{font-size:4.9px}
.legend{padding:2px 0 0 2px;width:80px;color:#888}
.legend h3{font-size:6.5px;line-height:10px;color:#555}
.legend li{height:10.6px;display:flex;align-items:center;font-size:6.4px}
.colors{margin:.5px 0 4px}
.colors i{width:8px;height:8px;margin:0 3px 0 1px;border:1px solid #999}
.c1{background:#c7dcea}.c2{background:#91a5c3}.c3{background:#efcaac}.c4{background:#b0dba9}.c5{background:#c4ae72}.c6{background:#f0dba3}.c7{background:#86b4b0}
.sizes li{width:45px;justify-content:space-between}
.sizes i{font-size:4px;padding-left:2px}
.sizes .m i{font-size:5px;padding-left:1px}
.sizes .l i{font-size:6px;padding-left:0}
.sheettabs{height:25px;padding-bottom:9px;background:#ececec;border-top:1px solid #ddd;display:flex;flex:none;color:#757575;font-size:6.2px}
.sheettabs span{background:#e4e4e4;border-right:1px solid #d4d4d4;border-bottom:1px solid #d4d4d4;height:15px;display:flex;align-items:center;padding-left:4px;gap:3px;flex:none}
.sheettabs .source{width:67px;padding-left:5px}
.sheettabs .t1{width:29px;padding-left:3px}
.t2,.t3,.t4,.t5,.t6{width:30.3px}
.t7{width:30px}
.d1,.d2{width:55.3px}
.sheettabs .active{background:#fff;color:#333;width:38px}
.sheettabs .add{width:17px}
.sheettabs::after{content:"";flex:1;height:15px;background:#e4e4e4;border-bottom:1px solid #d4d4d4}
.taskbar{height:21px;position:relative;display:flex;flex:none}
.wall{position:absolute;inset:0}
.apps,.tray,.clock{position:relative}
.tray{margin-left:auto}
.clock{width:48px;padding-top:2px;padding-right:3px;text-align:center;color:#fff;font:6px/9px "Open Sans",sans-serif;letter-spacing:-.1px}
```
